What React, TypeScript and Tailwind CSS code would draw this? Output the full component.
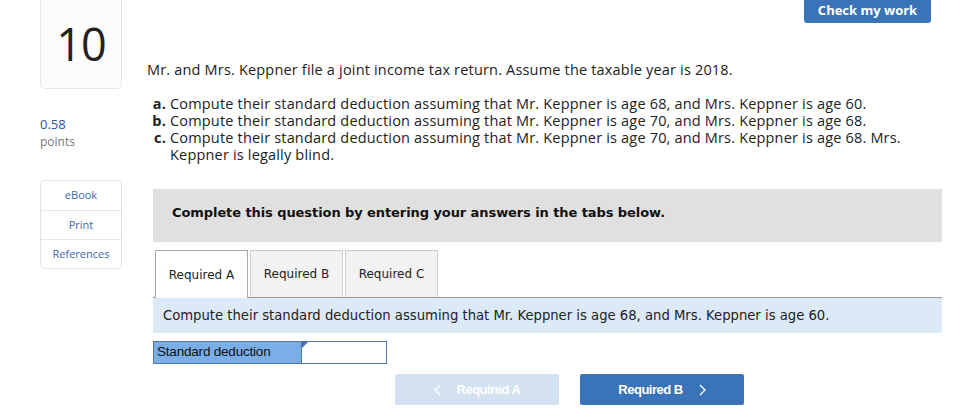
import React from "react";

export default function App() {
  const body = { fontFamily: "'Open Sans', Lato, sans-serif" };
  const verdana = { fontFamily: "'DejaVu Sans', Verdana, sans-serif" };
  const arial = { fontFamily: "'Liberation Sans', Arial, sans-serif" };
  const Chevron = ({ dir }: { dir: "l" | "r" }) => (
    <svg width="7" height="12" viewBox="0 0 7 12" fill="none" stroke="white" strokeWidth="1.4">
      {dir === "l" ? <path d="M6 1 L1 6 L6 11" /> : <path d="M1 1 L6 6 L1 11" />}
    </svg>
  );
  return (
    <div className="w-[963px] h-[418px] bg-white flex pl-[40px] overflow-hidden" style={body}>
      {/* left column */}
      <div className="w-[82px] flex flex-col">
        <div className="h-[89px] border border-t-0 border-[#e6e6e6] rounded-b-[5px] bg-[#fcfcfc] flex items-center justify-center">
          <span className="text-[45px] leading-none font-normal text-[#222] pb-[2px] tracking-[-1px]">10</span>
        </div>
        <div className="mt-[26px] text-[13px] leading-[18px] text-[#2b5797]">0.58</div>
        <div className="text-[12px] leading-[18px] text-[#777]">points</div>
        <div className="mt-[29px] border border-[#e3e3e3] rounded-[5px] text-[11px] text-[#3c68a8]">
          <div className="h-[30px] flex items-center justify-center border-b border-[#e8e8e8]">eBook</div>
          <div className="h-[29px] flex items-center justify-center border-b border-[#e8e8e8]">Print</div>
          <div className="h-[28px] flex items-center justify-center">References</div>
        </div>
      </div>

      {/* main column */}
      <div className="ml-[25px] w-[795px] flex flex-col">
        <div className="h-[23px] flex justify-end pr-[11px]">
          <div className="w-[127px] h-[23px] bg-[#3b73b9] rounded-b-[3px] text-white text-[13px] font-bold flex items-center justify-center pb-[2px]">
            Check my work
          </div>
        </div>
        <div className="mt-[38px] text-[14.5px] leading-[17px] tracking-[0.18px] text-[#222]">
          Mr. and Mrs. Keppner file a joint income tax return. Assume the taxable year is 2018.
        </div>
        <div className="mt-[17px] text-[14.5px] leading-[17px] tracking-[0.18px] text-[#222]">
          <div className="flex">
            <span className="w-[23px] shrink-0 text-right pr-[4px] font-bold">a.</span>
            <span>Compute their standard deduction assuming that Mr. Keppner is age 68, and Mrs. Keppner is age 60.</span>
          </div>
          <div className="flex">
            <span className="w-[23px] shrink-0 text-right pr-[4px] font-bold">b.</span>
            <span>Compute their standard deduction assuming that Mr. Keppner is age 70, and Mrs. Keppner is age 68.</span>
          </div>
          <div className="flex">
            <span className="w-[23px] shrink-0 text-right pr-[4px] font-bold">c.</span>
            <span className="w-[745px]">Compute their standard deduction assuming that Mr. Keppner is age 70, and Mrs. Keppner is age 68. Mrs. Keppner is legally blind.</span>
          </div>
        </div>

        <div className="ml-[6px] mt-[26px] w-[789px]" style={verdana}>
          <div className="h-[53px] bg-[#e0e0e0] pl-[19px] pt-[14px] text-[13px] tracking-[-0.08px] font-bold text-[#111]">
            Complete this question by entering your answers in the tabs below.
          </div>
          <div className="mt-[8px] h-[48px] flex items-end gap-[2px] pl-[2px] border-b border-[#999]">
            <div className="w-[93px] h-[48px] -mb-[1px] bg-white border border-b-0 border-[#aaa] flex items-center justify-center text-[12px] text-[#222]">
              Required A
            </div>
            <div className="w-[93px] h-[47px] bg-[#f2f2f2] border border-b-0 border-[#ccc] flex items-center justify-center text-[12px] text-[#222]">
              Required B
            </div>
            <div className="w-[93px] h-[47px] bg-[#f2f2f2] border border-b-0 border-[#ccc] flex items-center justify-center text-[12px] text-[#222]">
              Required C
            </div>
          </div>
          <div className="h-[35px] bg-[#dceaf8] pl-[10px] flex items-center text-[13.2px] text-[#222]">
            Compute their standard deduction assuming that Mr. Keppner is age 68, and Mrs. Keppner is age 60.
          </div>
          <div className="mt-[8px] flex h-[23px]" style={arial}>
            <div className="w-[149px] bg-[#7aaee7] border border-[#56779c] flex items-center pl-[3px] text-[13.5px] text-[#111] tracking-[-0.2px]">
              Standard deduction
            </div>
            <div className="relative w-[85px] bg-white border border-l-0 border-[#56779c]">
              <div className="absolute left-0 top-0 w-0 h-0 border-t-[6px] border-r-[6px] border-t-[#3b73b9] border-r-transparent" />
            </div>
          </div>
          <div className="mt-[10px] flex gap-[21px] pl-[242px]" style={arial}>
            <div className="w-[164px] h-[31px] bg-[#d3e1f1] rounded-[2px] flex items-center justify-center gap-[16px] text-white text-[13px] font-bold tracking-[-0.5px]">
              <Chevron dir="l" />
              <span>Required A</span>
            </div>
            <div className="w-[164px] h-[31px] bg-[#3b73b9] rounded-[2px] flex items-center justify-center gap-[16px] text-white text-[13px] font-bold tracking-[-0.5px]">
              <span>Required B</span>
              <Chevron dir="r" />
            </div>
          </div>
        </div>
      </div>
    </div>
  );
}
